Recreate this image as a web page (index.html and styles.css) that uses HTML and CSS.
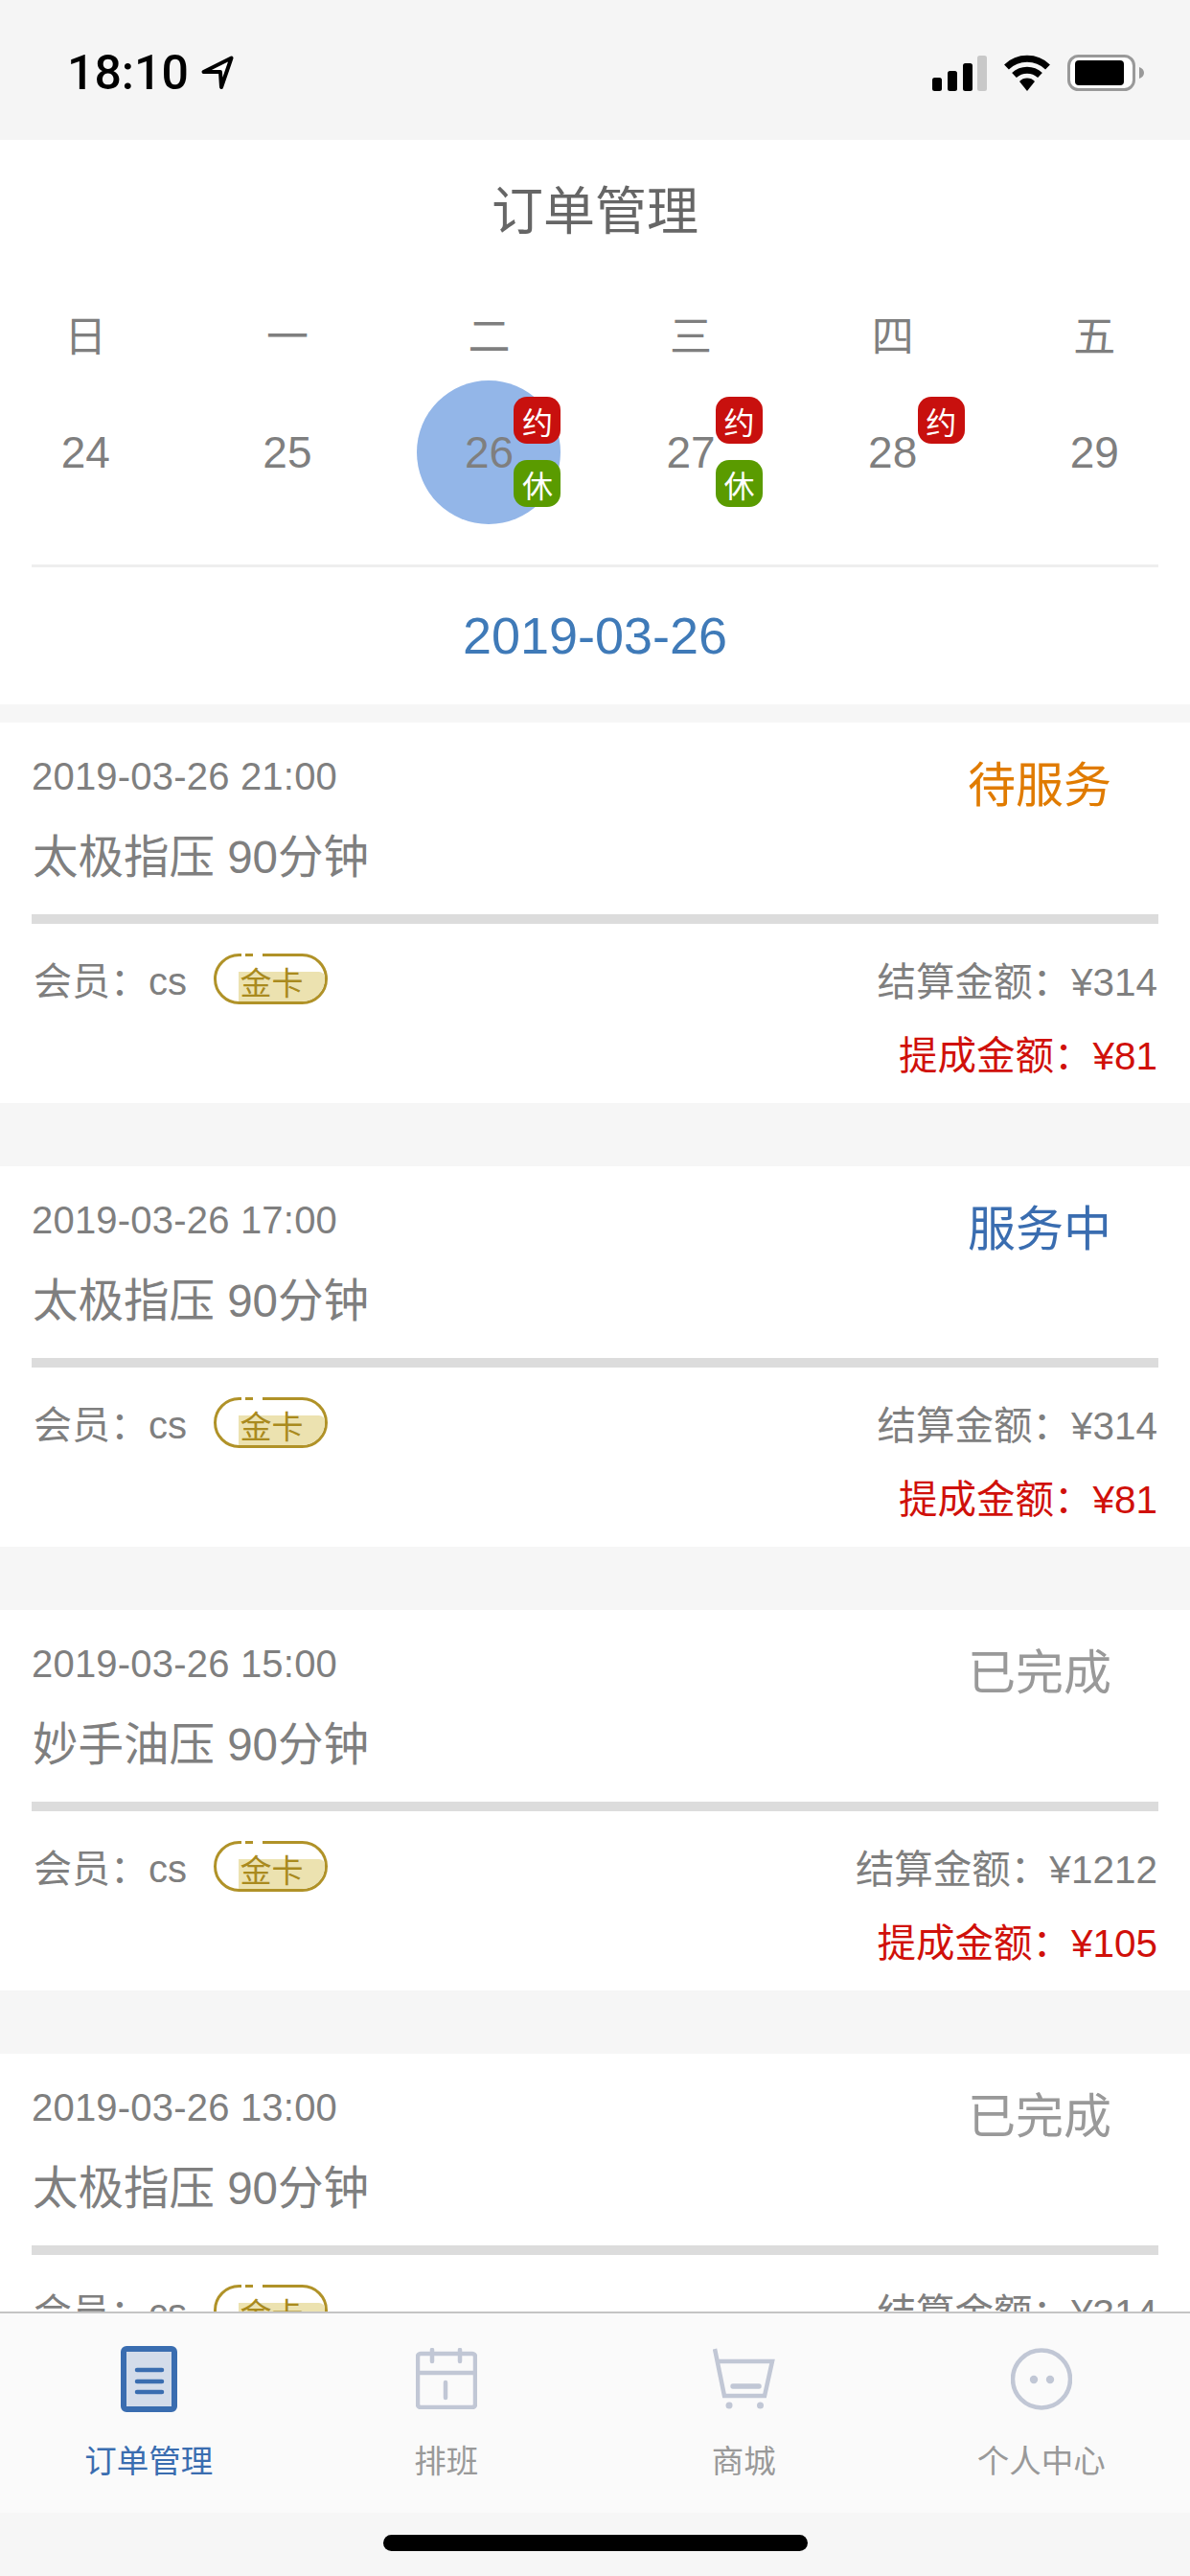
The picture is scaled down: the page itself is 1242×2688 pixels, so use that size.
FILE: index.html
```html
<!DOCTYPE html>
<html lang="zh-CN">
<head>
    <meta charset="UTF-8">
    <meta name="viewport" content="width=device-width, initial-scale=1.0">
    <title>订单管理</title>
    <link rel="stylesheet" href="styles.css">
</head>
<body>
    <div class="phone">
        <div class="status-bar">
            <div class="status-time">
                <span>18:10</span>
                <svg class="status-arrow" width="34" height="36" viewBox="0 0 34 36">
                    <path d="M2.500 17 L31.500 2.500 L21 33 L20 17 Z" fill="#fff" stroke="#000" stroke-width="4" stroke-linejoin="round"/>
                </svg>
            </div>
            <div class="status-icons">
                <svg width="57" height="38" viewBox="0 0 57 38">
                    <rect x="0" y="24" width="10" height="14" rx="2.5" fill="#000"/>
                    <rect x="16" y="17" width="10" height="21" rx="2.5" fill="#000"/>
                    <rect x="32" y="9" width="10" height="29" rx="2.5" fill="#000"/>
                    <rect x="47" y="1" width="10" height="37" rx="2.5" fill="#c8c8c8"/>
                </svg>
                <svg width="50" height="38" viewBox="0 0 50 38">
                    <path d="M3.5 13 A31 31 0 0 1 46.500 13" fill="none" stroke="#000" stroke-width="7"/>
                    <path d="M11.500 21.500 A20 20 0 0 1 38.500 21.500" fill="none" stroke="#000" stroke-width="7"/>
                    <path d="M25 38 L17 28 A11 11 0 0 1 33 28 Z" fill="#000"/>
                </svg>
                <svg width="80" height="38" viewBox="0 0 80 38">
                    <rect x="1.500" y="1.500" width="68" height="35" rx="10" fill="#fff" stroke="#999" stroke-width="3"/>
                    <rect x="8" y="6" width="51" height="26" rx="4" fill="#000"/>
                    <path d="M75 13 C78 14 80 16 80 19 C80 22 78 24 75 25 Z" fill="#999"/>
                </svg>
            </div>
        </div>

        <div class="main">
            <div class="calendar">
                <h1 class="page-title">订单管理</h1>
                <div class="week-row">
                    <span>日</span><span>一</span><span>二</span><span>三</span><span>四</span><span>五</span>
                </div>
                <div class="day-row">
                    <div class="day-cell"><div class="day">24</div></div>
                    <div class="day-cell"><div class="day">25</div></div>
                    <div class="day-cell">
                        <div class="day selected">26
                            <span class="mark mark-book">约</span>
                            <span class="mark mark-rest">休</span>
                        </div>
                    </div>
                    <div class="day-cell">
                        <div class="day">27
                            <span class="mark mark-book">约</span>
                            <span class="mark mark-rest">休</span>
                        </div>
                    </div>
                    <div class="day-cell">
                        <div class="day">28
                            <span class="mark mark-book">约</span>
                        </div>
                    </div>
                    <div class="day-cell"><div class="day">29</div></div>
                </div>
                <div class="calendar-line"></div>
                <div class="current-date">2019-03-26</div>
            </div>

            <div class="order">
                <div class="order-head">
                    <div>
                        <div class="order-time">2019-03-26 21:00</div>
                        <div class="order-name">太极指压 90分钟</div>
                    </div>
                    <div class="order-status waiting">待服务</div>
                </div>
                <div class="order-line"></div>
                <div class="order-row">
                    <div class="member">会员：cs<span class="vip"><span>金卡</span></span></div>
                    <div class="settle">结算金额：¥314</div>
                </div>
                <div class="order-commission">提成金额：¥81</div>
            </div>

            <div class="order">
                <div class="order-head">
                    <div>
                        <div class="order-time">2019-03-26 17:00</div>
                        <div class="order-name">太极指压 90分钟</div>
                    </div>
                    <div class="order-status serving">服务中</div>
                </div>
                <div class="order-line"></div>
                <div class="order-row">
                    <div class="member">会员：cs<span class="vip"><span>金卡</span></span></div>
                    <div class="settle">结算金额：¥314</div>
                </div>
                <div class="order-commission">提成金额：¥81</div>
            </div>

            <div class="order">
                <div class="order-head">
                    <div>
                        <div class="order-time">2019-03-26 15:00</div>
                        <div class="order-name">妙手油压 90分钟</div>
                    </div>
                    <div class="order-status">已完成</div>
                </div>
                <div class="order-line"></div>
                <div class="order-row">
                    <div class="member">会员：cs<span class="vip"><span>金卡</span></span></div>
                    <div class="settle">结算金额：¥1212</div>
                </div>
                <div class="order-commission">提成金额：¥105</div>
            </div>

            <div class="order">
                <div class="order-head">
                    <div>
                        <div class="order-time">2019-03-26 13:00</div>
                        <div class="order-name">太极指压 90分钟</div>
                    </div>
                    <div class="order-status">已完成</div>
                </div>
                <div class="order-line"></div>
                <div class="order-row">
                    <div class="member">会员：cs<span class="vip"><span>金卡</span></span></div>
                    <div class="settle">结算金额：¥314</div>
                </div>
                <div class="order-commission">提成金额：¥81</div>
            </div>
        </div>

        <div class="tab-bar">
            <div class="tab active">
                <div class="tab-icon">
                    <svg width="59" height="69" viewBox="0 0 59 69">
                        <rect x="3" y="3" width="53" height="63" rx="3" fill="#d3dcea" stroke="#3a6db0" stroke-width="6"/>
                        <path d="M17 25 H43 M17 37 H43 M17 48 H43" stroke="#3a6db0" stroke-width="4.500" stroke-linecap="round"/>
                    </svg>
                </div>
                <span>订单管理</span>
            </div>
            <div class="tab">
                <div class="tab-icon">
                    <svg width="64" height="64" viewBox="0 0 64 64" fill="none" stroke="#c1c7d5" stroke-width="4.500">
                        <rect x="2" y="6" width="60" height="56" rx="3"/>
                        <path d="M2 26 H62"/>
                        <path d="M17 2 V14 M46 2 V14 M31 36 V52" stroke-linecap="round"/>
                    </svg>
                </div>
                <span>排班</span>
            </div>
            <div class="tab">
                <div class="tab-icon">
                    <svg width="65" height="64" viewBox="0 0 65 64" fill="none" stroke="#c1c7d5" stroke-width="4.500">
                        <path d="M2 1 L12 50 H54 L62 14 H5"/>
                        <path d="M21 40 H48" stroke-width="5.500" stroke-linecap="round"/>
                        <circle cx="17" cy="60" r="3.500" fill="#c1c7d5" stroke="none"/>
                        <circle cx="49.500" cy="60" r="3.500" fill="#c1c7d5" stroke="none"/>
                    </svg>
                </div>
                <span>商城</span>
            </div>
            <div class="tab">
                <div class="tab-icon">
                    <svg width="64" height="65" viewBox="0 0 64 65">
                        <circle cx="32" cy="32.500" r="30" fill="none" stroke="#c1c7d5" stroke-width="4.500"/>
                        <circle cx="24" cy="33" r="4.200" fill="#c1c7d5"/>
                        <circle cx="41" cy="33" r="4.200" fill="#c1c7d5"/>
                    </svg>
                </div>
                <span>个人中心</span>
            </div>
        </div>

        <div class="home-area">
            <div class="home-indicator"></div>
        </div>
    </div>
</body>
</html>
```

FILE: styles.css
```css
/* Reset and Basic Styles */
* {
    box-sizing: border-box;
    margin: 0;
    padding: 0;
}

body {
    font-family: 'Liberation Sans', 'Noto Sans CJK SC', sans-serif;
    background-color: #f6f6f6;
    color: #7f7f7f;
}

.phone {
    width: 1242px;
    height: 2688px;
    display: flex;
    flex-direction: column;
    overflow: hidden;
}

/* Status bar */
.status-bar {
    height: 146px;
    flex-shrink: 0;
    display: flex;
    align-items: center;
    justify-content: space-between;
    padding: 6px 48px 0 70px;
    background-color: #f5f5f5;
    color: #000;
}

.status-time {
    display: flex;
    align-items: center;
    gap: 13px;
    font-family: Roboto, sans-serif;
    font-size: 50px;
    font-weight: 500;
    line-height: 40px;
}

.status-icons {
    display: flex;
    align-items: center;
    gap: 17px;
}

/* Calendar */
.main {
    flex: 1;
    overflow: hidden;
}

.calendar {
    background-color: #fff;
    padding: 35px 0 37px;
    margin-bottom: 19px;
}

.page-title {
    font-size: 54px;
    font-weight: 400;
    line-height: 80px;
    text-align: center;
    color: #666;
}

.week-row,
.day-row {
    display: grid;
    grid-template-columns: repeat(6, 210.6px);
    margin-left: -16px;
}

.week-row {
    margin-top: 61px;
    font-size: 44px;
    line-height: 60px;
    text-align: center;
}

.day-row {
    margin-top: 15px;
}

.day-cell {
    display: flex;
    justify-content: center;
}

.day {
    position: relative;
    width: 150px;
    height: 150px;
    border-radius: 50%;
    display: flex;
    align-items: center;
    justify-content: center;
    font-size: 46px;
}

.day.selected {
    background-color: #93b6e8;
}

.mark {
    position: absolute;
    right: 0;
    width: 49px;
    height: 49px;
    border-radius: 14px;
    display: flex;
    align-items: center;
    justify-content: center;
    font-size: 32px;
    color: #fff;
}

.mark-book {
    top: 17px;
    background-color: #c8100e;
}

.mark-rest {
    top: 83px;
    background-color: #5a9b00;
}

.calendar-line {
    height: 3px;
    margin: 42px 33px 0;
    background-color: #eee;
}

.current-date {
    margin-top: 36px;
    font-size: 54px;
    line-height: 70px;
    text-align: center;
    color: #3f7ab8;
}

/* Order cards */
.order {
    height: 397px;
    margin-bottom: 66px;
    padding: 34px 33px 0;
    background-color: #fff;
}

.order-head {
    display: flex;
    justify-content: space-between;
    align-items: flex-start;
}

.order-time {
    font-size: 40px;
    letter-spacing: 0.2px;
    line-height: 44px;
}

.order-name {
    margin-top: 33px;
    padding-left: 1px;
    font-size: 47.5px;
    line-height: 60px;
}

.order-status {
    margin-top: 2px;
    margin-right: 49px;
    font-size: 50px;
    line-height: 60px;
    color: #999;
}

.order-status.waiting {
    color: #e07b00;
}

.order-status.serving {
    color: #3a6db0;
}

.order-line {
    height: 10px;
    margin-top: 29px;
    background-color: #dcdcdc;
}

.order-row {
    display: flex;
    justify-content: space-between;
    align-items: center;
    height: 60px;
    margin-top: 27px;
    padding: 0 1px 0 2px;
    font-size: 40px;
}

.settle {
    font-size: 40.5px;
}

.member {
    display: flex;
    align-items: center;
}

.order-commission {
    height: 60px;
    margin-top: 21px;
    padding-right: 1px;
    font-size: 40.5px;
    line-height: 60px;
    text-align: right;
    color: #d0100a;
}

/* Gold card badge */
.vip {
    position: relative;
    width: 119px;
    height: 53px;
    margin-left: 28px;
    border: 3px solid #b09228;
    border-radius: 27px;
    display: flex;
    align-items: center;
    justify-content: center;
    font-size: 33px;
    color: #a98a1e;
}

.vip span {
    position: relative;
    top: 3px;
    left: 1px;
}

.vip::before {
    content: "";
    position: absolute;
    left: 23px;
    right: 0;
    top: 16px;
    bottom: 0;
    border-radius: 0 6px 24px 0;
    background-color: #ece2b0;
}

.vip::after {
    content: "";
    position: absolute;
    left: 26px;
    top: -3px;
    width: 22px;
    height: 3px;
    background: linear-gradient(90deg, #fff 0 4px, #b09228 4px 12px, #fff 12px);
}

/* Tab bar */
.tab-bar {
    height: 210px;
    flex-shrink: 0;
    display: grid;
    grid-template-columns: repeat(4, 1fr);
    padding-top: 33px;
    border-top: 2px solid #c4c4c4;
    background-color: #fafafa;
    color: #999;
    font-size: 33.5px;
    line-height: 40px;
    text-align: center;
}

.tab-icon {
    height: 70px;
    margin-bottom: 32px;
    display: flex;
    align-items: center;
    justify-content: center;
}

.tab.active {
    color: #3a6db0;
}

.home-area {
    height: 66px;
    flex-shrink: 0;
    display: flex;
    justify-content: center;
    padding-top: 23px;
    background-color: #f6f6f6;
}

.home-indicator {
    width: 443px;
    height: 17px;
    border-radius: 9px;
    background-color: #000;
}
```
